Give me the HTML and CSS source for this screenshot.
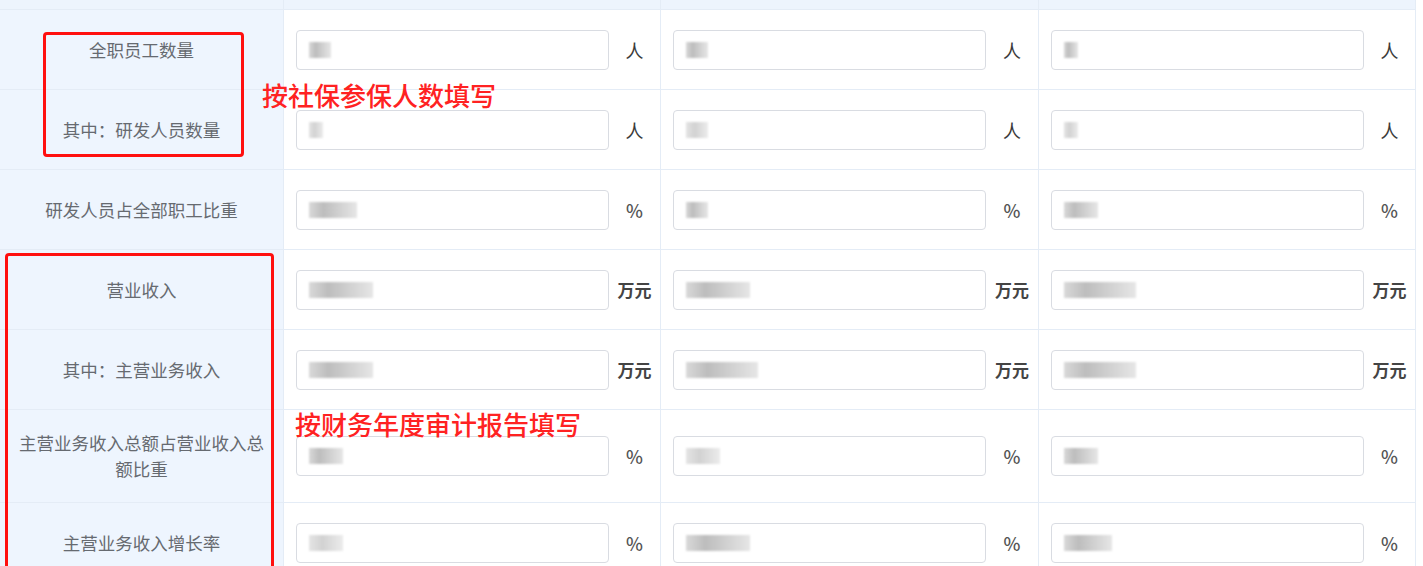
FILE: index.html
```html
<!DOCTYPE html>
<html lang="zh-CN">
<head>
<meta charset="UTF-8" />
<title>企业基本情况</title>
<link rel="stylesheet" href="styles.css">
</head>
<body>
<div class="sheet">
  <div class="grid">
    <div class="cell head label"></div>
    <div class="cell head"></div>
    <div class="cell head"></div>
    <div class="cell head"></div>

    <div class="cell label">全职员工数量</div>
    <div class="cell data"><div class="field"><span class="blur b2"></span></div><span class="unit">人</span></div>
    <div class="cell data"><div class="field"><span class="blur b2"></span></div><span class="unit">人</span></div>
    <div class="cell data"><div class="field"><span class="blur b1"></span></div><span class="unit">人</span></div>

    <div class="cell label">其中：研发人员数量</div>
    <div class="cell data"><div class="field"><span class="blur b1 light"></span></div><span class="unit">人</span></div>
    <div class="cell data"><div class="field"><span class="blur b2 light"></span></div><span class="unit">人</span></div>
    <div class="cell data"><div class="field"><span class="blur b1 light"></span></div><span class="unit">人</span></div>

    <div class="cell label">研发人员占全部职工比重</div>
    <div class="cell data"><div class="field"><span class="blur b4"></span></div><span class="unit pct">%</span></div>
    <div class="cell data"><div class="field"><span class="blur b2"></span></div><span class="unit pct">%</span></div>
    <div class="cell data"><div class="field"><span class="blur b3"></span></div><span class="unit pct">%</span></div>

    <div class="cell label">营业收入</div>
    <div class="cell data"><div class="field"><span class="blur b5"></span></div><span class="unit money">万元</span></div>
    <div class="cell data"><div class="field"><span class="blur b5"></span></div><span class="unit money">万元</span></div>
    <div class="cell data"><div class="field"><span class="blur b6"></span></div><span class="unit money">万元</span></div>

    <div class="cell label">其中：主营业务收入</div>
    <div class="cell data"><div class="field"><span class="blur b5"></span></div><span class="unit money">万元</span></div>
    <div class="cell data"><div class="field"><span class="blur b6"></span></div><span class="unit money">万元</span></div>
    <div class="cell data"><div class="field"><span class="blur b6"></span></div><span class="unit money">万元</span></div>

    <div class="cell label">主营业务收入总额占营业收入总额比重</div>
    <div class="cell data"><div class="field"><span class="blur b3"></span></div><span class="unit pct">%</span></div>
    <div class="cell data"><div class="field"><span class="blur b3 light"></span></div><span class="unit pct">%</span></div>
    <div class="cell data"><div class="field"><span class="blur b3"></span></div><span class="unit pct">%</span></div>

    <div class="cell label">主营业务收入增长率</div>
    <div class="cell data"><div class="field"><span class="blur b3 light"></span></div><span class="unit pct">%</span></div>
    <div class="cell data"><div class="field"><span class="blur b5"></span></div><span class="unit pct">%</span></div>
    <div class="cell data"><div class="field"><span class="blur b4"></span></div><span class="unit pct">%</span></div>
  </div>

  <!-- annotations drawn over the table -->
  <div class="mark mark-staff"></div>
  <div class="note note-staff">按社保参保人数填写</div>
  <div class="mark mark-finance"></div>
  <div class="note note-finance">按财务年度审计报告填写</div>
</div>
</body>
</html>
```

FILE: styles.css
```css
* {
  box-sizing: border-box;
}
html, body {
  margin: 0;
  padding: 0;
  height: 100%;
  overflow: hidden;
  background: #fff;
}
body {
  font-family: "Noto Sans CJK SC", "Noto Sans", sans-serif;
  color: #606266;
}
.sheet {
  position: relative;
  width: 1423px;
}
.grid {
  display: grid;
  grid-template-columns: 284px 377px 378px 377px;
  grid-template-rows: 10px repeat(5, 80px) 93px 80px;
}
.cell {
  border-right: 1px solid #e4ecf6;
  border-bottom: 1px solid #e4ecf6;
  background: #fff;
}
.cell.head {
  background: #edf4fd;
}
.label {
  background: #eef5fe;
  display: flex;
  align-items: center;
  justify-content: center;
  text-align: center;
  padding: 0 12px;
  font-size: 17.5px;
  line-height: 26px;
  color: #666a70;
}
.data {
  display: flex;
  align-items: center;
  padding-left: 12px;
}
.field {
  width: 313px;
  height: 40px;
  border: 1px solid #d9dce2;
  border-radius: 4px;
  background: #fff;
  display: flex;
  align-items: center;
  padding-left: 12px;
}
.blur {
  display: inline-block;
  height: 16px;
  background: linear-gradient(90deg, #d9d9d9 0%, #bdbdbd 30%, #cfcfcf 60%, #e6e6e6 100%);
  filter: blur(1.2px);
}
.blur.light {
  background: linear-gradient(90deg, #e4e4e4 0%, #d2d2d2 40%, #ececec 100%);
}
.b1 { width: 14px; }
.b2 { width: 22px; }
.b3 { width: 34px; }
.b4 { width: 48px; }
.b5 { width: 64px; }
.b6 { width: 72px; }
.unit {
  flex: 1;
  text-align: center;
  font-size: 18px;
  color: #3a3a3a;
}
.unit.money {
  font-weight: 700;
  font-size: 17px;
  color: #444;
}
.unit.pct {
  font-size: 18px;
  font-weight: 500;
  color: #555;
}
.mark {
  position: absolute;
  border: 3px solid #ff0f0f;
  border-radius: 4px;
}
.mark-staff {
  left: 43px;
  top: 32px;
  width: 201px;
  height: 125px;
}
.mark-finance {
  left: 5px;
  top: 253px;
  width: 269px;
  height: 340px;
}
.note {
  position: absolute;
  font-size: 26px;
  font-weight: 500;
  line-height: 30px;
  color: #ff2222;
  white-space: nowrap;
}
.note-staff {
  left: 262px;
  top: 80px;
}
.note-finance {
  left: 295px;
  top: 409px;
}
```
